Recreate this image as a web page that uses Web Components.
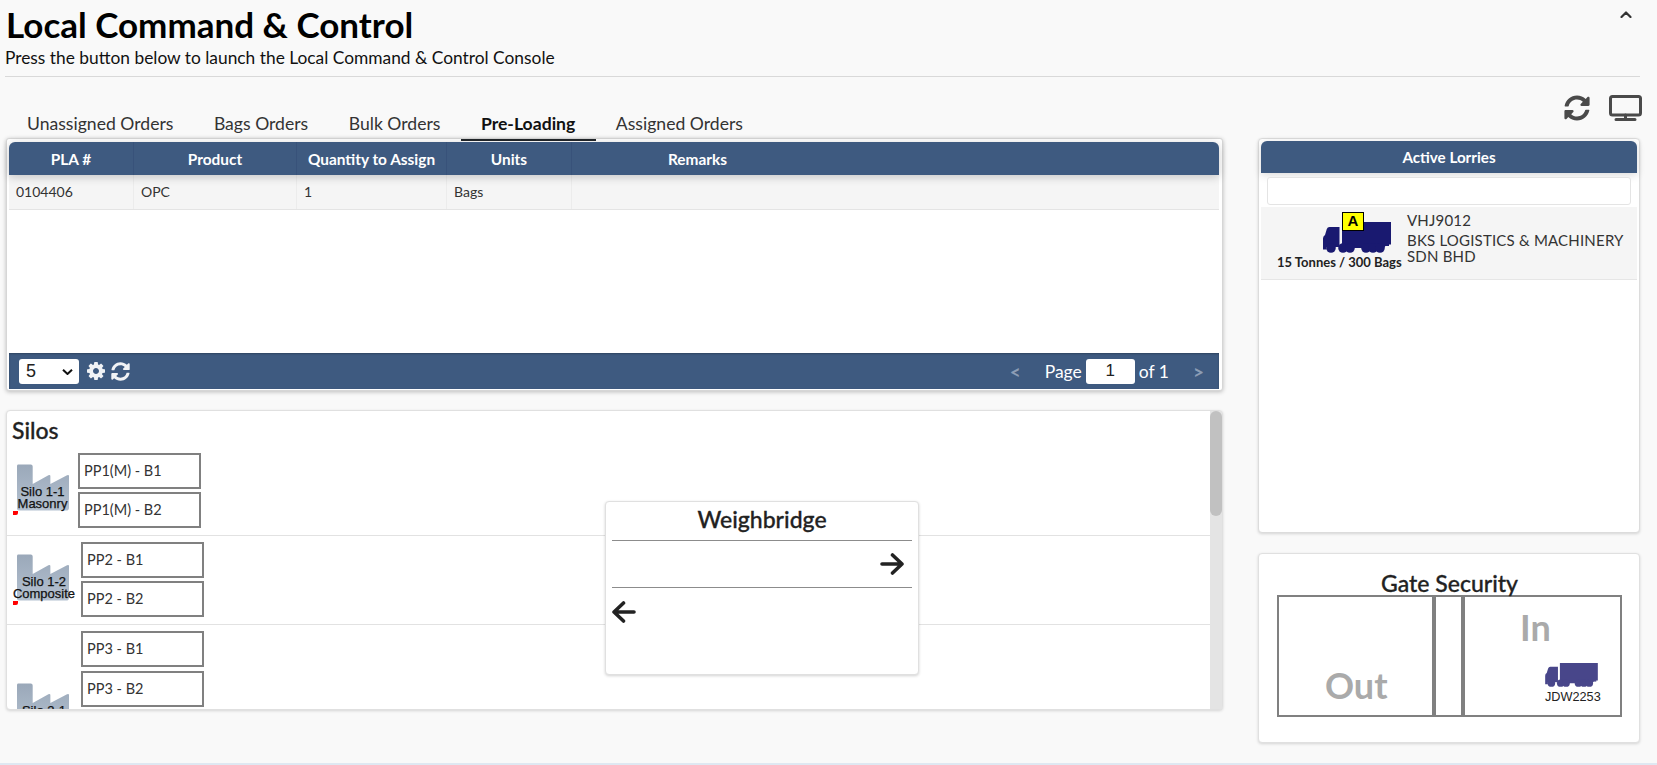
<!DOCTYPE html>
<html>
<head>
<meta charset="utf-8">
<title>Local Command &amp; Control</title>
<style>
    html, body { margin: 0; padding: 0; height: 100%; overflow: hidden; background: #f9f9f9; }
    body { font-family: Lato, "Liberation Sans", sans-serif; color: #212529; }
</style>
</head>
<body>
<lcc-app></lcc-app>

<script>
const REFRESH = 'M370.72 133.28C339.458 104.008 298.888 87.962 255.848 88c-77.458.068-144.328 53.178-162.791 126.85-1.344 5.363-6.122 9.15-11.651 9.15H24.103c-7.498 0-13.194-6.807-11.807-14.176C33.933 94.924 134.813 8 256 8c66.448 0 126.791 26.136 171.315 68.685L463.03 40.97C478.149 25.851 504 36.559 504 57.941V192c0 13.255-10.745 24-24 24H345.941c-21.382 0-32.09-25.851-16.971-40.971l41.75-41.749zM32 296h134.059c21.382 0 32.09 25.851 16.971 40.971l-41.75 41.75c31.262 29.273 71.835 45.319 114.876 45.28 77.418-.07 144.315-53.144 162.787-126.849 1.344-5.363 6.122-9.15 11.651-9.15h57.304c7.498 0 13.194 6.807 11.807 14.176C478.067 417.076 377.187 504 256 504c-66.448 0-126.791-26.136-171.315-68.685L48.97 471.03C33.851 486.149 8 475.441 8 454.059V320c0-13.255 10.745-24 24-24z';
const COG = 'M1152 896q0-106-75-181t-181-75-181 75-75 181 75 181 181 75 181-75 75-181zm512-109v222q0 12-8 23t-20 13l-185 28q-19 54-39 91 35 50 107 138 10 12 10 25t-9 23q-27 37-99 108t-94 71q-12 0-26-9l-138-108q-44 23-91 38-16 136-29 186-7 28-36 28h-222q-14 0-24.5-8.5t-11.5-21.5l-28-184q-49-16-90-37l-141 107q-10 9-25 9-14 0-25-11-126-114-165-168-7-10-7-23 0-12 8-23 15-21 51-66.5t54-70.5q-27-50-41-99l-183-27q-13-2-21-12.5t-8-23.5v-222q0-12 8-23t19-13l186-28q14-46 39-92-40-57-107-138-10-12-10-24 0-10 9-23 26-36 98.5-107.5t94.5-71.5q13 0 26 10l138 107q44-23 91-38 16-136 29-186 7-28 36-28h222q14 0 24.5 8.5t11.5 21.5l28 184q49 16 90 37l142-107q9-9 24-9 13 0 25 10 129 119 165 170 7 8 7 22 0 12-8 23-15 21-51 66.5t-54 70.5q26 50 41 98l183 28q13 2 21 12.5t8 23.5z';

const FONT = 'Lato, "Liberation Sans", sans-serif';

class TruckIcon extends HTMLElement {
    constructor() {
        super();
        const color = this.getAttribute('color') || '#191970';
        const shadow = this.attachShadow({ mode: 'open' });
        shadow.innerHTML = `
            <style>
                :host { display: block; line-height: 0; }
                svg { width: 100%; height: 100%; display: block; }
            </style>
            <svg viewBox="0 0 68 31">
                <g fill="${color}">
                    <path d="M19 0H68V22.5H63.5L61 26H19z"/>
                    <path d="M16.500 5H6.500Q4.500 5 3.800 7L2 13Q0 14 0 16.500V27.500H3.500V25H16.500z"/>
                    <circle cx="8" cy="26" r="4.800"/>
                    <circle cx="20" cy="26" r="4.800"/>
                    <circle cx="27" cy="26" r="4.800"/>
                    <circle cx="43" cy="26" r="4.800"/>
                    <circle cx="50" cy="26" r="4.800"/>
                    <circle cx="57" cy="26" r="4.800"/>
                    <path d="M34 22H66V24H34z"/>
                </g>
            </svg>
        `;
    }
}

class FaIcon extends HTMLElement {
    constructor() {
        super();
        const isCog = this.getAttribute('name') === 'cog';
        const shadow = this.attachShadow({ mode: 'open' });
        shadow.innerHTML = `
            <style>
                :host { display: inline-block; line-height: 0; }
                svg { width: 100%; height: 100%; display: block; fill: currentColor; }
            </style>
            <svg viewBox="${isCog ? '128 128 1536 1536' : '0 0 512 512'}"><path d="${isCog ? COG : REFRESH}"/></svg>
        `;
    }
}

const tabsTemplate = document.createElement('template');
tabsTemplate.innerHTML = `
    <style>
        :host {
            display: flex;
            flex-flow: row nowrap;
            height: 35px;
            padding-left: 1px;
            font: 17.600px ${FONT};
            color: #333;
        }
        .tab {
            padding: 10px 20.500px 0 20px;
            box-sizing: border-box;
            height: 38px;
            white-space: nowrap;
            position: relative;
            z-index: 1;
        }
        .active {
            font-weight: 700;
            color: #111;
            border-bottom: 2px solid #212529;
        }
    </style>
    <div class="tab">Unassigned Orders</div>
    <div class="tab">Bags Orders</div>
    <div class="tab">Bulk Orders</div>
    <div class="tab active">Pre-Loading</div>
    <div class="tab">Assigned Orders</div>
`;

class OrderTabs extends HTMLElement {
    constructor() {
        super();
        this._shadowRoot = this.attachShadow({ mode: 'open' });
        this._shadowRoot.appendChild(tabsTemplate.content.cloneNode(true));
    }
}

const gridTemplate = document.createElement('template');
gridTemplate.innerHTML = `
    <style>
        :host {
            display: flex;
            flex-flow: column nowrap;
            height: 253px;
            box-sizing: border-box;
            background: #fff;
            border: 1px solid #d6d6d6;
            border-radius: 3px;
            padding: 3px 3px 1px 2px;
            box-shadow: 0 1px 4px rgba(0,0,0,.25);
            font: 14px ${FONT};
            color: #333;
        }
        .cols {
            display: grid;
            grid-template-columns: 125px 163px 150px 125px 1fr;
        }
        .head {
            height: 33px;
            background: #3e5a80;
            border-radius: 6px 6px 0 0;
            color: #fff;
            font-weight: 700;
            font-size: 15.400px;
            box-shadow: 0 2px 10px rgba(0,0,0,.2);
            position: relative;
        }
        .head div {
            display: flex;
            align-items: center;
            justify-content: center;
            border-right: 1px solid #38527a;
            white-space: nowrap;
        }
        .head div:last-child { border-right: 0; padding-right: 396px; }
        .row {
            height: 35px;
            box-sizing: border-box;
            background: #f5f5f5;
            border-bottom: 1px solid #e4e4e4;
        }
        .row div {
            padding-left: 7px;
            line-height: 33px;
            border-right: 1px solid #ececec;
        }
        .row div:last-child { border-right: 0; }
        .body { flex: 1; }
        .foot {
            height: 36px;
            background: #3e5a80;
            box-shadow: inset 0 1px 2px rgba(0,0,0,.25);
            display: flex;
            align-items: center;
            padding: 0 15px 0 10px;
            color: #fff;
            font-size: 17.500px;
        }
        .pick { position: relative; width: 60px; height: 25px; }
        select {
            appearance: none;
            -webkit-appearance: none;
            display: block;
            width: 60px;
            height: 25px;
            font: 18px "Liberation Sans", sans-serif;
            background: #fff;
            color: #222;
            border: 0;
            border-radius: 3px;
            padding-left: 7px;
        }
        .chev {
            position: absolute;
            right: 6px;
            top: 10px;
            width: 11px;
            height: 6px;
            fill: none;
            stroke: #111;
            stroke-width: 2;
        }
        fa-icon { color: #f0f2f5; }
        .cog { width: 18px; height: 18px; margin-left: 8px; }
        .ref { width: 19px; height: 19px; margin-left: 6px; }
        .pager { margin-left: auto; display: flex; align-items: center; }
        .nav { color: #8c9db5; font-weight: 700; font-size: 19px; }
        .pageno {
            width: 49px;
            height: 25px;
            box-sizing: border-box;
            margin: 0 4px;
            border: 0;
            border-radius: 3px;
            text-align: center;
            font: 17px "Liberation Sans", sans-serif;
            color: #222;
            background: #fff;
        }
    </style>
    <div class="cols head">
        <div>PLA #</div><div>Product</div><div>Quantity to Assign</div><div>Units</div><div>Remarks</div>
    </div>
    <div class="cols row">
        <div>0104406</div><div>OPC</div><div>1</div><div>Bags</div><div></div>
    </div>
    <div class="body"></div>
    <div class="foot">
        <div class="pick">
            <select><option>5</option><option>10</option></select>
            <svg class="chev" viewBox="0 0 11 6"><path d="M1 .7L5.500 5L10 .7"/></svg>
        </div>
        <fa-icon class="cog" name="cog"></fa-icon>
        <fa-icon class="ref" name="refresh"></fa-icon>
        <div class="pager">
            <span class="nav" style="margin-right:24px">&lt;</span>
            <span>Page</span>
            <input class="pageno" value="1">
            <span>of 1</span>
            <span class="nav" style="margin-left:24px">&gt;</span>
        </div>
    </div>
`;

class OrderGrid extends HTMLElement {
    constructor() {
        super();
        this._shadowRoot = this.attachShadow({ mode: 'open' });
        this._shadowRoot.appendChild(gridTemplate.content.cloneNode(true));
    }
}

class SiloRow extends HTMLElement {
    constructor() {
        super();
        const lines = this.getAttribute('label').split('|');
        const names = this.getAttribute('bins').split('|');
        const shadow = this.attachShadow({ mode: 'open' });
        shadow.innerHTML = `
            <style>
                :host {
                    display: flex;
                    flex-flow: row nowrap;
                    align-items: flex-start;
                    box-sizing: border-box;
                    height: ${this.getAttribute('height') || 89}px;
                    padding: ${this.getAttribute('pad') || '6px 0 0 6px'};
                    border-bottom: 1px solid #e2e2e2;
                }
                .silo {
                    position: relative;
                    width: ${this.getAttribute('silow') || 65}px;
                    height: 62px;
                    flex: none;
                    margin-top: ${this.getAttribute('silotop') || 11}px;
                }
                svg { position: absolute; left: 3px; top: 0; width: 54px; height: 47px; }
                .label {
                    position: absolute;
                    left: -8px;
                    right: -2px;
                    top: 22px;
                    text-align: center;
                    font: 13px/11.500px "Liberation Sans", sans-serif;
                    -webkit-text-stroke: .25px #111;
                    color: #111;
                    white-space: nowrap;
                }
                .flag {
                    position: absolute;
                    left: 0;
                    top: 47px;
                    width: 5px;
                    height: 4px;
                    background: #f00;
                    border-radius: 0 0 2px 0;
                }
                .bins { display: flex; flex-flow: column nowrap; gap: ${this.getAttribute('gap') || 3}px; }
                .bin {
                    width: 123px;
                    height: 36px;
                    box-sizing: border-box;
                    border: 2px solid #808080;
                    padding-left: 4px;
                    font: 14.500px/32px ${FONT};
                    color: #333;
                    background: #fff;
                    white-space: nowrap;
                }
            </style>
            <div class="silo">
                <svg viewBox="0 0 55 47">
                    <defs><linearGradient id="g" x1="0" y1="0" x2="0" y2="1">
                        <stop offset="0" stop-color="#9aa8b9"/><stop offset="1" stop-color="#b4c1d0"/>
                    </linearGradient></defs>
                    <path d="M2 0H15Q17 0 17 2V20L33 11Q35 10 35 12V20L52 11Q54 10 54 12V44Q54 47 51 47H3Q1 47 1 45V2Q1 0 2 0z" fill="url(#g)"/>
                </svg>
                <div class="label">${lines.join('<br>')}</div>
                <div class="flag"></div>
            </div>
            <div class="bins">
                ${names.map(n => `<div class="bin">${n}</div>`).join('')}
            </div>
        `;
    }
}

const silosTemplate = document.createElement('template');
silosTemplate.innerHTML = `
    <style>
        :host {
            display: block;
            position: relative;
            height: 300px;
            margin-top: 19px;
        }
        .scroll {
            height: 100%;
            box-sizing: border-box;
            overflow: hidden;
            background: #fff;
            border: 1px solid #e0e0e0;
            border-radius: 4px;
            box-shadow: 0 1px 3px rgba(0,0,0,.15);
        }
        h2 {
            margin: 0;
            padding: 5px 5px 0;
            height: 34px;
            box-sizing: border-box;
            font: 500 23px/28px ${FONT};
            -webkit-text-stroke: .3px #222;
            color: #222;
        }
        .track {
            position: absolute;
            right: 1px;
            top: 1px;
            bottom: 1px;
            width: 12px;
            background: #e4e4e4;
        }
        .thumb {
            height: 105px;
            background: #c1c1c1;
            border-radius: 6px;
        }
        weigh-bridge {
            position: absolute;
            left: 599px;
            top: 91px;
        }
    </style>
    <div class="scroll">
        <h2>Silos</h2>
        <silo-row label="Silo 1-1|Masonry" bins="PP1(M) - B1|PP1(M) - B2" height="91" pad="8px 0 0 6px" silow="65" silotop="11"></silo-row>
        <silo-row label="Silo 1-2|Composite" bins="PP2 - B1|PP2 - B2" height="89" silow="68" silotop="12"></silo-row>
        <silo-row label="Silo 2-1|Masonry" bins="PP3 - B1|PP3 - B2" height="89" silow="68" silotop="52" gap="4"></silo-row>
    </div>
    <div class="track"><div class="thumb"></div></div>
    <weigh-bridge></weigh-bridge>
`;

class SilosPanel extends HTMLElement {
    constructor() {
        super();
        this._shadowRoot = this.attachShadow({ mode: 'open' });
        this._shadowRoot.appendChild(silosTemplate.content.cloneNode(true));
    }
}

const weighTemplate = document.createElement('template');
weighTemplate.innerHTML = `
    <style>
        :host {
            display: block;
            width: 314px;
            height: 174px;
            box-sizing: border-box;
            background: #fff;
            border: 1px solid #e0e0e0;
            border-radius: 4px;
            box-shadow: 0 1px 3px rgba(0,0,0,.18);
            padding: 0 6px;
            color: #222;
        }
        h3 {
            margin: 0;
            height: 38px;
            font: 500 23px/34px ${FONT};
            -webkit-text-stroke: .3px #222;
            text-align: center;
            border-bottom: 1px solid #8c8c8c;
        }
        .lane { height: 47px; display: flex; align-items: center; box-sizing: border-box; }
        .in { justify-content: flex-end; padding-right: 8px; border-bottom: 1px solid #8c8c8c; }
        svg { width: 24px; height: 22px; fill: none; stroke: #222; stroke-width: 3.600; stroke-linecap: round; stroke-linejoin: round; }
    </style>
    <h3>Weighbridge</h3>
    <div class="lane in"><svg viewBox="0 0 24 22"><path d="M2 11H22M12.500 2L22 11L12.500 20"/></svg></div>
    <div class="lane out"><svg viewBox="0 0 24 22"><path d="M22 11H2M11.500 2L2 11L11.500 20"/></svg></div>
`;

class WeighBridge extends HTMLElement {
    constructor() {
        super();
        this._shadowRoot = this.attachShadow({ mode: 'open' });
        this._shadowRoot.appendChild(weighTemplate.content.cloneNode(true));
    }
}

const lorriesTemplate = document.createElement('template');
lorriesTemplate.innerHTML = `
    <style>
        :host {
            display: flex;
            flex-flow: column nowrap;
            height: 395px;
            box-sizing: border-box;
            background: #fff;
            border: 1px solid #dcdcdc;
            border-radius: 4px;
            padding: 2px;
            box-shadow: 0 1px 3px rgba(0,0,0,.15);
        }
        .head {
            height: 32px;
            background: #3e5a80;
            border-radius: 6px 6px 0 0;
            color: #fff;
            font: 700 15.200px/32px ${FONT};
            text-align: center;
            box-shadow: 0 2px 8px rgba(0,0,0,.15);
        }
        input {
            display: block;
            box-sizing: border-box;
            margin: 4px 6px 2px;
            width: calc(100% - 12px);
            height: 28px;
            border: 1px solid #e4e4e4;
            border-radius: 3px;
            background: #fff;
        }
        .lorry {
            height: 73px;
            box-sizing: border-box;
            background: #f5f5f5;
            border-bottom: 1px solid #e6e6e6;
            display: flex;
            flex-flow: row nowrap;
        }
        .pic { width: 146px; flex: none; position: relative; }
        truck-icon { position: absolute; left: 62px; top: 15px; width: 68px; height: 31px; }
        .badge {
            position: absolute;
            left: 81px;
            top: 5px;
            width: 22px;
            height: 19px;
            box-sizing: border-box;
            background: #ff0;
            border: 1px solid #000;
            font: 700 15px/15px "Liberation Sans", sans-serif;
            color: #000;
            text-align: center;
        }
        .cap {
            position: absolute;
            left: 16px;
            top: 47px;
            font: 700 13px/16px ${FONT};
            color: #222;
            white-space: nowrap;
        }
        .info {
            padding-top: 5px;
            font: 15px/16px ${FONT};
            color: #333;
            letter-spacing: .2px;
        }
        .plate { margin-bottom: 4px; }
    </style>
    <div class="head">Active Lorries</div>
    <input type="text">
    <div class="lorry">
        <div class="pic">
            <truck-icon></truck-icon>
            <div class="badge">A</div>
            <div class="cap">15 Tonnes / 300 Bags</div>
        </div>
        <div class="info">
            <div class="plate">VHJ9012</div>
            <div>BKS LOGISTICS &amp; MACHINERY<br>SDN BHD</div>
        </div>
    </div>
`;

class ActiveLorries extends HTMLElement {
    constructor() {
        super();
        this._shadowRoot = this.attachShadow({ mode: 'open' });
        this._shadowRoot.appendChild(lorriesTemplate.content.cloneNode(true));
    }
}

const gateTemplate = document.createElement('template');
gateTemplate.innerHTML = `
    <style>
        :host {
            display: block;
            height: 190px;
            margin-top: 20px;
            box-sizing: border-box;
            background: #fff;
            border: 1px solid #e0e0e0;
            border-radius: 4px;
            box-shadow: 0 1px 3px rgba(0,0,0,.15);
            padding: 18px 17px 0 18px;
        }
        h3 {
            margin: 0;
            height: 23px;
            font: 500 23px/23px ${FONT};
            -webkit-text-stroke: .3px #222;
            text-align: center;
            color: #222;
            white-space: nowrap;
        }
        .gate {
            display: grid;
            grid-template-columns: 153px 33px 1fr;
            height: 122px;
            box-sizing: border-box;
            border: 2px solid #808080;
        }
        .side {
            font: 700 36px ${FONT};
            color: #aaa;
            display: flex;
            position: relative;
        }
        .mid { border-left: 4px solid #808080; border-right: 4px solid #808080; }
        .out { align-items: flex-end; padding: 0 0 10px 46px; line-height: 40px; }
        .in { padding: 10px 0 0 55px; line-height: 40px; }
        .lorry { position: absolute; left: 80px; top: 66px; width: 60px; }
        truck-icon { width: 53px; height: 24px; }
        .plate { font: 12.700px/14px "Liberation Sans", sans-serif; color: #222; margin-top: 3px; white-space: nowrap; }
    </style>
    <h3>Gate Security</h3>
    <div class="gate">
        <div class="side out">Out</div>
        <div class="mid"></div>
        <div class="side in">In
            <div class="lorry">
                <truck-icon color="#48468a"></truck-icon>
                <div class="plate">JDW2253</div>
            </div>
        </div>
    </div>
`;

class GateSecurity extends HTMLElement {
    constructor() {
        super();
        this._shadowRoot = this.attachShadow({ mode: 'open' });
        this._shadowRoot.appendChild(gateTemplate.content.cloneNode(true));
    }
}

const appTemplate = document.createElement('template');
appTemplate.innerHTML = `
    <style>
        :host {
            display: block;
            height: 765px;
            box-sizing: border-box;
            overflow: hidden;
            background: #f9f9f9;
            border-bottom: 2px solid #dfe8f2;
            font-family: ${FONT};
        }
        header {
            position: relative;
            margin: 0 17px 0 5px;
            height: 77px;
            box-sizing: border-box;
            border-bottom: 1px solid #d9d9d9;
        }
        h1 { margin: 0; padding: 4px 0 0 1px; font: 700 35px/40px ${FONT}; color: #000; white-space: nowrap; }
        p { margin: 0; padding-top: 4px; font: 17.350px/20px ${FONT}; color: #111; white-space: nowrap; }
        .collapse {
            position: absolute;
            right: 8px;
            top: 11px;
            width: 12px;
            height: 7px;
            fill: none;
            stroke: #333;
            stroke-width: 2.200;
            stroke-linecap: round;
            stroke-linejoin: round;
        }
        main {
            display: grid;
            grid-template-columns: 1217px 382px;
            column-gap: 35px;
            padding-left: 6px;
            padding-top: 26px;
        }
        .tools {
            display: flex;
            justify-content: flex-end;
            gap: 19px;
            height: 35px;
            margin: -8px -2px 8px 0;
            box-sizing: border-box;
            color: #4a4a4a;
        }
        .tools fa-icon { width: 26px; height: 26px; }
        .tools svg { width: 33px; height: 26px; fill: none; stroke: currentColor; }
    </style>
    <header>
        <h1>Local Command &amp; Control</h1>
        <p>Press the button below to launch the Local Command &amp; Control Console</p>
        <svg class="collapse" viewBox="0 0 11 7"><path d="M1 6L5.500 1.500L10 6"/></svg>
    </header>
    <main>
        <section>
            <order-tabs></order-tabs>
            <order-grid></order-grid>
            <silos-panel></silos-panel>
        </section>
        <section>
            <div class="tools">
                <fa-icon name="refresh"></fa-icon>
                <svg viewBox="0 0 33 26">
                    <rect x="1.500" y="1.500" width="30" height="18.500" rx="2" stroke-width="3"/>
                    <path d="M16.500 20V24M7 24.500H26" stroke-width="3" stroke-linecap="round"/>
                </svg>
            </div>
            <active-lorries></active-lorries>
            <gate-security></gate-security>
        </section>
    </main>
`;

class LccApp extends HTMLElement {
    constructor() {
        super();
        this._shadowRoot = this.attachShadow({ mode: 'open' });
        this._shadowRoot.appendChild(appTemplate.content.cloneNode(true));
    }
}

customElements.define('truck-icon', TruckIcon);
customElements.define('fa-icon', FaIcon);
customElements.define('order-tabs', OrderTabs);
customElements.define('order-grid', OrderGrid);
customElements.define('silo-row', SiloRow);
customElements.define('weigh-bridge', WeighBridge);
customElements.define('silos-panel', SilosPanel);
customElements.define('active-lorries', ActiveLorries);
customElements.define('gate-security', GateSecurity);
customElements.define('lcc-app', LccApp);
</script>
</body>
</html>
